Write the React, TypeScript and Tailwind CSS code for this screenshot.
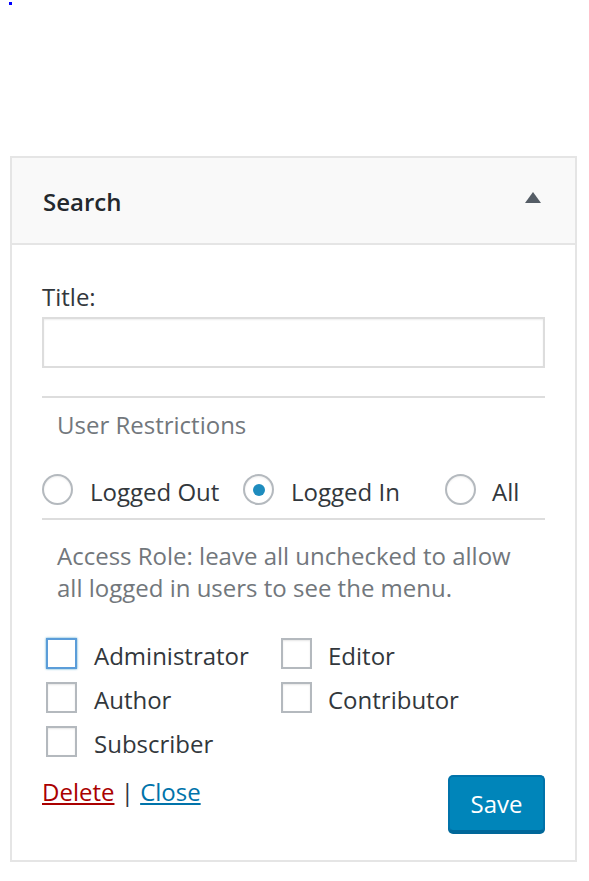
import React, { useState } from 'react';

const font = { fontFamily: '"Open Sans", "Noto Sans", sans-serif' };

const roles = [
  ['Administrator', 'Editor'],
  ['Author', 'Contributor'],
  ['Subscriber', ''],
];

const Radio = ({ checked }: { checked?: boolean }) => (
  <span className="flex h-[31px] w-[31px] shrink-0 items-center justify-center rounded-full border-2 border-[#b4b9be] bg-white shadow-[inset_0_1px_2px_rgba(0,0,0,0.07)]">
    {checked && <span className="h-[12px] w-[12px] rounded-full bg-[#1e8cbe]" />}
  </span>
);

const Box = ({ focused }: { focused?: boolean }) => (
  <span
    className={
      focused
        ? 'block h-[31px] w-[31px] shrink-0 border-2 border-[#5b9dd9] bg-white shadow-[0_0_2px_rgba(30,140,190,0.8)]'
        : 'block h-[31px] w-[31px] shrink-0 border-2 border-[#b4b9be] bg-white shadow-[inset_0_1px_2px_rgba(0,0,0,0.1)]'
    }
  />
);

export default function App() {
  const [title, setTitle] = useState('');

  return (
    <div className="min-h-[881px] bg-white text-[#444]" style={font}>
      <div className="pl-[9px] pt-[2px]">
        <span className="block h-[3px] w-[3px] bg-[#0000ff]" />
      </div>

      <div className="ml-[10px] mt-[151px] w-[567px] border-2 border-[#e5e5e5] bg-white">
        {/* header */}
        <div className="flex h-[87px] items-center justify-between border-b-2 border-[#e5e5e5] bg-[#f9f9f9] pl-[31px] pr-[34px]">
          <h3 className="mt-[2px] text-[24px] font-semibold text-[#23282d]">Search</h3>
          <svg width="16" height="12" viewBox="0 0 16 12" className="-mt-[6px]">
            <path d="M8 0 L16 11 L0 11 Z" fill="#555d66" />
          </svg>
        </div>

        {/* body */}
        <div className="px-[30px] pt-[38px] pb-[28px]">
          <label className="block text-[24px] leading-[28px] text-[#32373c]">Title:</label>
          <input
            value={title}
            onChange={(e) => setTitle(e.target.value)}
            className="mt-[6px] block h-[51px] w-full border-2 border-[#ddd] bg-white px-2 text-[22px] shadow-[inset_0_1px_2px_rgba(0,0,0,0.07)] outline-none"
          />

          <div className="mt-[28px] border-t-2 border-[#ddd]">
            <p className="pl-[15px] pt-[11px] text-[24px] leading-[32px] text-[#72777c]">User Restrictions</p>
            <div className="mt-[33px] flex items-center pb-[13px] text-[24px] text-[#32373c]">
              <label className="flex w-[201px] items-center">
                <Radio />
                <span className="ml-[17px] block h-[31px] leading-[35px]">Logged Out</span>
              </label>
              <label className="flex w-[202px] items-center">
                <Radio checked />
                <span className="ml-[17px] block h-[31px] leading-[35px]">Logged In</span>
              </label>
              <label className="flex items-center">
                <Radio />
                <span className="ml-[16px] block h-[31px] leading-[35px]">All</span>
              </label>
            </div>
          </div>

          <div className="border-t-2 border-[#ddd]">
            <p className="pl-[15px] pt-[20px] text-[24px] leading-[32px] text-[#72777c]">
              Access Role: leave all unchecked to allow
              <br />
              all logged in users to see the menu.
            </p>
            <div className="mt-[34px] flex flex-col gap-[13px] pl-[4px]">
              {roles.map(([a, b], i) => (
                <div key={i} className="flex text-[24px] text-[#32373c]">
                  <label className="flex w-[235px] items-center">
                    <Box focused={i === 0} />
                    <span className="ml-[17px] block h-[31px] leading-[35px]">{a}</span>
                  </label>
                  {b && (
                    <label className="flex items-center">
                      <Box />
                      <span className="ml-[16px] block h-[31px] leading-[35px]">{b}</span>
                    </label>
                  )}
                </div>
              ))}
            </div>
          </div>

          <div className="mt-[18px] flex items-start justify-between">
            <div className="mt-[1px] text-[24px] leading-[32px]">
              <a href="#" className="text-[#a00] underline">Delete</a>
              <span className="text-[#32373c]"> | </span>
              <a href="#" className="text-[#0073aa] underline">Close</a>
            </div>
            <button
              type="button"
              className="h-[57px] w-[97px] rounded-[5px] border-2 border-[#0073aa] border-b-[#006799] bg-[#0085ba] text-[24px] text-white shadow-[0_2px_0_#006799]"
            >
              Save
            </button>
          </div>
        </div>
      </div>
    </div>
  );
}
